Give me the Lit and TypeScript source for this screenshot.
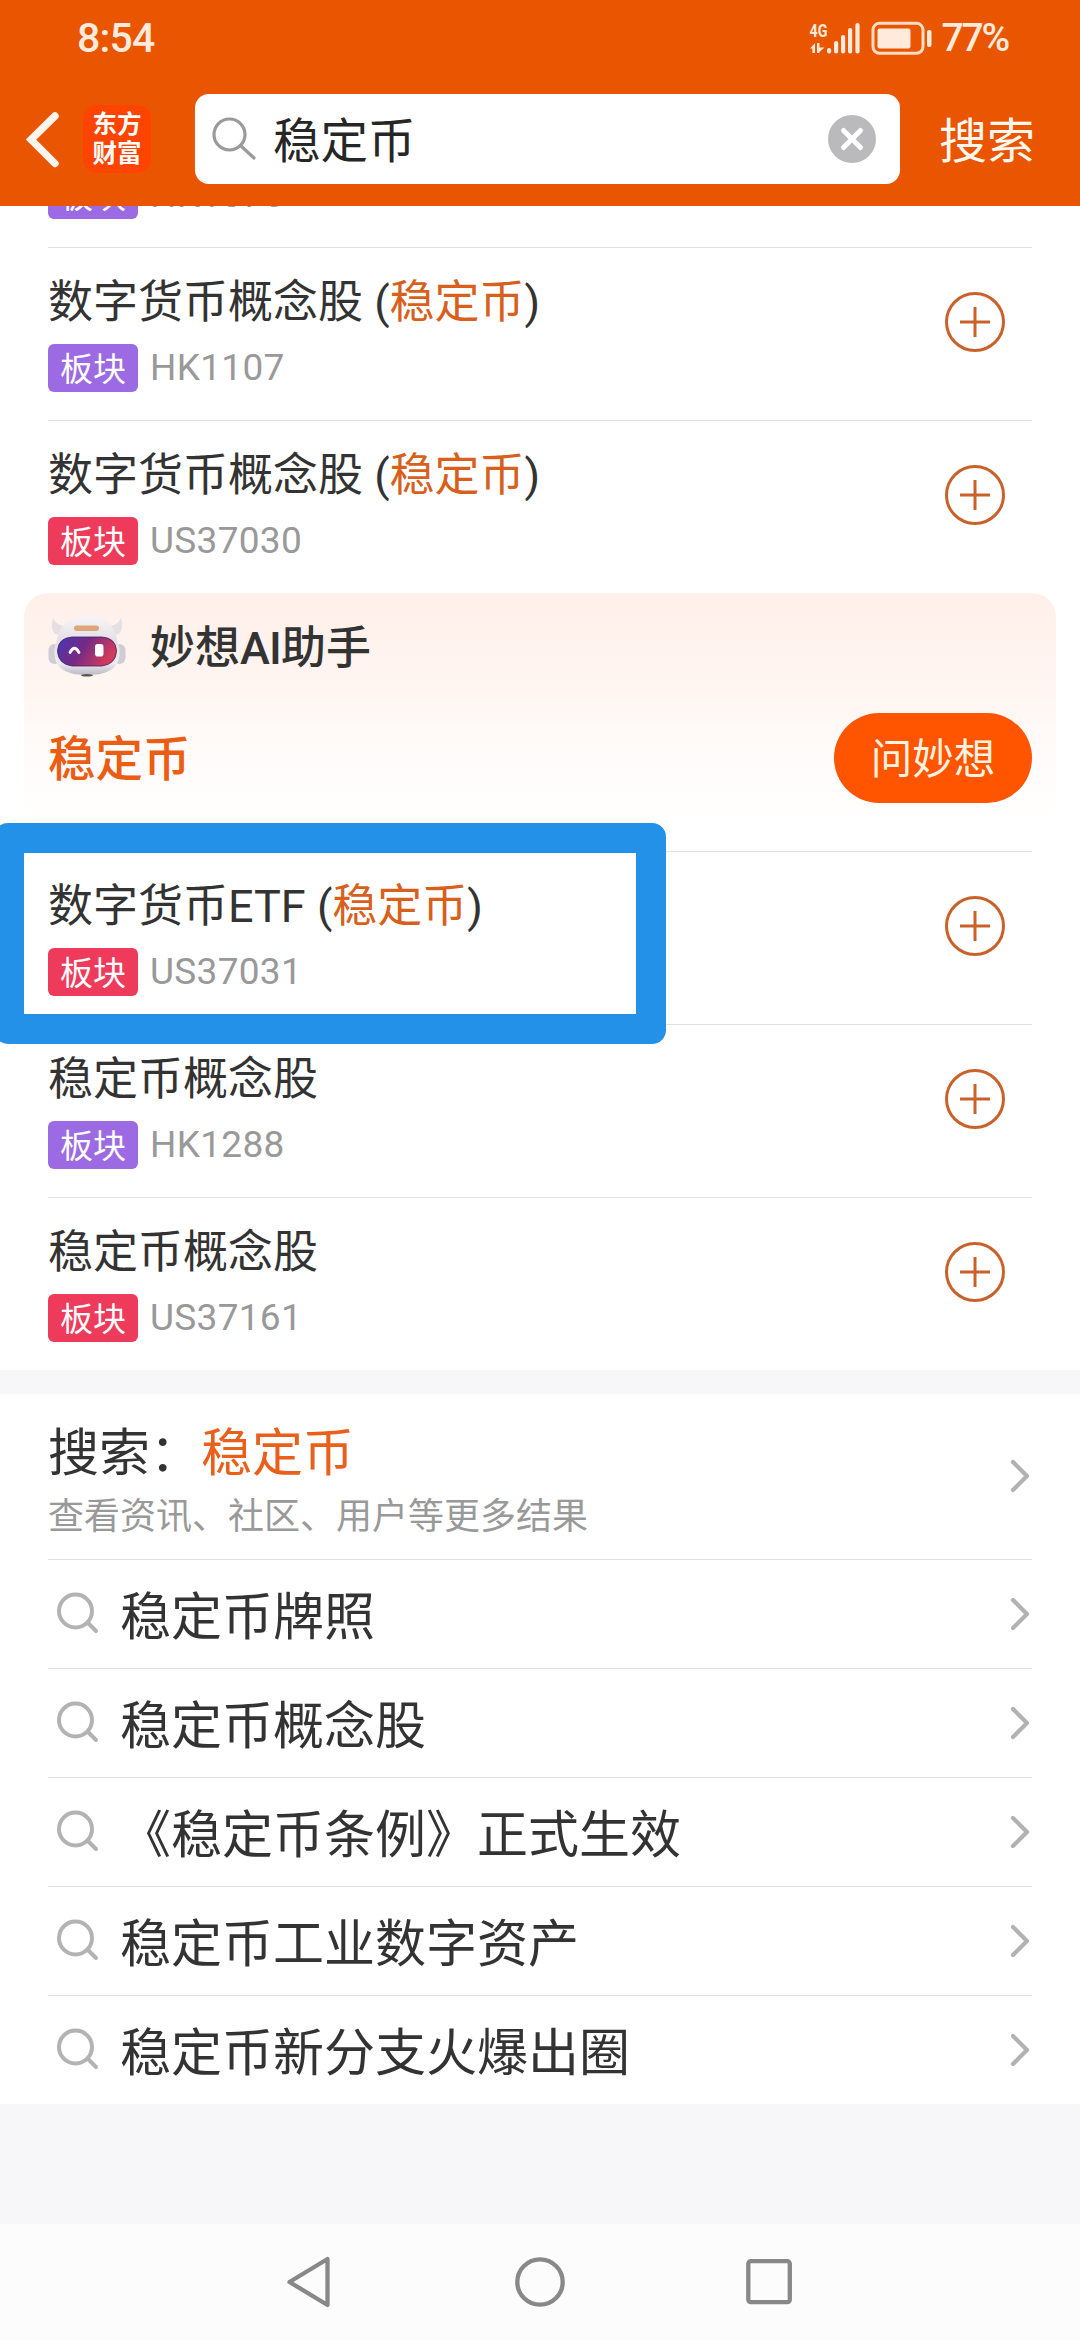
import { LitElement, html, css, svg } from "lit";
import { customElement, property } from "lit/decorators.js";

interface Board {
  name: string;
  alias?: string;
  market: "hk" | "us";
  code: string;
  marked?: boolean;
}

const KEYWORD = "稳定币";

const BOARDS_TOP: Board[] = [
  { name: "数字货币", market: "hk", code: "HK1076" },
  { name: "数字货币概念股", alias: KEYWORD, market: "hk", code: "HK1107" },
  { name: "数字货币概念股", alias: KEYWORD, market: "us", code: "US37030" },
];

const BOARDS_BOTTOM: Board[] = [
  { name: "数字货币ETF", alias: KEYWORD, market: "us", code: "US37031", marked: true },
  { name: "稳定币概念股", market: "hk", code: "HK1288" },
  { name: "稳定币概念股", market: "us", code: "US37161" },
];

const SUGGESTIONS = [
  "稳定币牌照",
  "稳定币概念股",
  "《稳定币条例》正式生效",
  "稳定币工业数字资产",
  "稳定币新分支火爆出圈",
];

const chevron = html`<svg class="chevron" width="24" height="36" viewBox="0 0 24 36" fill="none">
  <path d="M5 4 19 18 5 32" stroke="#b2b2b2" stroke-width="4.2" stroke-linecap="round" stroke-linejoin="round" />
</svg>`;

@customElement("status-bar")
class StatusBar extends LitElement {
  static styles = css`
    :host {
      display: flex;
      align-items: center;
      height: 76px;
      padding: 0 72px 0 77px;
      color: #ffeadb;
      box-sizing: border-box;
    }
    .time {
      flex: 1;
      font-size: 41px;
      font-weight: 500;
      line-height: 76px;
      letter-spacing: -0.8px;
    }
    .icons {
      display: block;
      margin-right: 9px;
    }
    .net {
      font: 700 19px Roboto, sans-serif;
    }
    .percent {
      font-size: 39px;
      font-weight: 500;
      line-height: 76px;
      letter-spacing: -2.2px;
    }
  `;
  render() {
    return html`
      <div class="time">8:54</div>
      <svg class="icons" width="124" height="36" viewBox="807 18 124 36" fill="#ffeadb">
        <text class="net" x="807.5" y="35" textLength="18" lengthAdjust="spacingAndGlyphs">4G</text>
        <path d="M808 46.5 813 41V51H810.400V46.500ZM815 41H817.400V45.500H822.500L817.400 50V51H815Z" />
        ${[
          [825, 46],
          [832, 39],
          [839, 33],
          [846, 26],
          [853.4, 21],
        ].map(([x, y]) => svg`<rect x=${x} y=${y} width="4.2" height=${51.5 - y} rx="2" />`)}
        <rect x="871" y="21.300" width="50" height="30" rx="6.500" fill="none" stroke="#ffdcc4" stroke-width="3" />
        <rect x="875.500" y="26.500" width="33" height="20" rx="2" />
        <rect x="925" y="28" width="4.500" height="17" rx="2" />
      </svg>
      <div class="percent">77%</div>
    `;
  }
}

@customElement("search-header")
class SearchHeader extends LitElement {
  static styles = css`
    :host {
      display: flex;
      align-items: center;
      height: 130px;
      padding: 0 45px 4px 22px;
      box-sizing: border-box;
    }
    .back {
      display: block;
    }
    .logo {
      display: grid;
      align-content: center;
      justify-content: center;
      width: 68px;
      height: 68px;
      margin: 0 44px 0 17px;
      border-radius: 14px;
      background: #ff4400;
      color: #fff;
      font-size: 24.500px;
      font-weight: 700;
      line-height: 29.500px;
      box-sizing: border-box;
    }
    .field {
      display: flex;
      align-items: center;
      width: 705px;
      height: 90px;
      padding: 0 24px 0 17px;
      border-radius: 14px;
      background: #fff;
      box-sizing: border-box;
    }
    .query {
      flex: 1;
      margin-left: 16px;
      padding-top: 6px;
      color: #262626;
      font-size: 47.500px;
      line-height: 84px;
    }
    .submit {
      padding-top: 6px;
      margin-left: 39px;
      color: #fff8ee;
      font-size: 48px;
      line-height: 84px;
    }
  `;
  render() {
    return html`
      <svg class="back" width="44" height="64" viewBox="22 107 44 64" fill="none">
        <path d="M55 116 31 139.500 55 163.500" stroke="#fff5ec" stroke-width="7.400" stroke-linecap="round" />
      </svg>
      <div class="logo"><span>东方</span><span>财富</span></div>
      <div class="field">
        <svg width="45" height="45" viewBox="0 0 45 45" fill="none" stroke="#9a9a9a" stroke-width="3.200">
          <circle cx="17.500" cy="17.500" r="15.500" />
          <path d="M28.500 28.500 42 41" stroke-linecap="round" />
        </svg>
        <div class="query">稳定币</div>
        <svg width="48" height="48" viewBox="0 0 48 48">
          <circle cx="24" cy="24" r="24" fill="#bababd" />
          <path d="M15.500 15.500 32.500 32.500M32.500 15.500 15.500 32.500" stroke="#fff" stroke-width="5" stroke-linecap="round" />
        </svg>
      </div>
      <div class="submit">搜索</div>
    `;
  }
}

@customElement("board-row")
class BoardRow extends LitElement {
  @property({ attribute: false }) board!: Board;

  static styles = css`
    :host {
      display: block;
      position: relative;
      height: 173px;
      padding: 0 48px;
    }
    .row {
      display: flex;
      height: 173px;
      padding: 0 27px 0 0;
      border-top: 1px solid #e2e2e2;
      box-sizing: border-box;
    }
    .info {
      flex: 1;
    }
    .name {
      height: 66px;
      margin-top: 22px;
      color: #333;
      font-size: 45px;
      line-height: 66px;
      white-space: pre;
    }
    .alias {
      color: #d85f1c;
    }
    .meta {
      display: flex;
      align-items: center;
      height: 48px;
      margin-top: 8px;
      gap: 12px;
    }
    .tag {
      width: 90px;
      height: 48px;
      border-radius: 6px;
      color: #fff;
      font-size: 33px;
      line-height: 52px;
      text-align: center;
    }
    .hk {
      background: #9c6be4;
    }
    .us {
      background: #ee3b5b;
    }
    .code {
      color: #999;
      font-size: 37px;
      line-height: 48px;
      letter-spacing: 0.3px;
    }
    .add {
      display: block;
      margin-top: 44px;
    }
    .mark {
      position: absolute;
      left: -6px;
      top: -28px;
      width: 672px;
      height: 221px;
      border: 30px solid #2491e9;
      border-radius: 14px;
      box-sizing: border-box;
      z-index: 1;
    }
  `;
  render() {
    const b = this.board;
    return html`
      <div class="row">
        <div class="info">
          <div class="name">${b.name}${b.alias ? html` (<span class="alias">${b.alias}</span>)` : ""}</div>
          <div class="meta">
            <span class="tag ${b.market}">板块</span>
            <span class="code">${b.code}</span>
          </div>
        </div>
        <svg class="add" width="60" height="60" viewBox="0 0 60 60" fill="none" stroke="#c9622a">
          <circle cx="30" cy="30" r="28.500" stroke-width="3" />
          <path d="M15 30H45M30 15V45" stroke-width="3" />
        </svg>
      </div>
      ${b.marked ? html`<div class="mark"></div>` : ""}
    `;
  }
}

@customElement("assistant-card")
class AssistantCard extends LitElement {
  static styles = css`
    :host {
      display: block;
      height: 258px;
      padding: 0 24px;
      box-sizing: border-box;
    }
    .card {
      height: 230px;
      padding: 0 24px;
      border-radius: 24px;
      background: linear-gradient(#ffefe9, #fff6f2 45%, #fffaf8 62%, #fff);
      box-sizing: border-box;
    }
    .head {
      display: flex;
      align-items: center;
      height: 106px;
      gap: 24px;
    }
    .title {
      padding-top: 5px;
      color: #333;
      font-size: 45px;
      font-weight: 500;
      line-height: 100px;
    }
    .latin {
      letter-spacing: -0.8px;
    }
    .ask {
      display: flex;
      align-items: center;
      justify-content: space-between;
      height: 90px;
      margin-top: 14px;
    }
    .topic {
      padding-top: 5px;
      color: #ec5c12;
      font-size: 47.500px;
      font-weight: 500;
      line-height: 85px;
    }
    .button {
      width: 198px;
      height: 90px;
      padding-top: 4px;
      border-radius: 45px;
      background: #ff5500;
      color: #fff3e0;
      font-size: 41.500px;
      line-height: 86px;
      text-align: center;
      box-sizing: border-box;
    }
  `;
  render() {
    return html`
      <div class="card">
        <div class="head">
          <svg width="78" height="62" viewBox="0 0 78 62">
            <defs>
              <linearGradient id="visor" x1="0" x2="1" y1="0" y2="0.35">
                <stop offset="0" stop-color="#4638b4" />
                <stop offset="0.5" stop-color="#742a86" />
                <stop offset="1" stop-color="#d13a5c" />
              </linearGradient>
              <linearGradient id="shell" x1="0" x2="0" y1="0" y2="1">
                <stop offset="0" stop-color="#f8f6f8" />
                <stop offset="0.4" stop-color="#e4e1e6" />
                <stop offset="0.8" stop-color="#eeecf1" />
                <stop offset="1" stop-color="#bdb8c4" />
              </linearGradient>
            </defs>
            <path d="M5 3Q2 13 7 19L13 20 18 11Q8 11 5 3ZM73 3Q76 13 71 19L65 20 60 11Q70 11 73 3Z" fill="#e3dfe3" />
            <rect x="0.500" y="29" width="12" height="20" rx="6" fill="#cfccd4" />
            <rect x="65.500" y="29" width="12" height="20" rx="6" fill="#cfccd4" />
            <path
              d="M39 0.500C54 0.500 64 7 68 20L71.500 34C73 52 62 60 39 60 16 60 5 52 6.500 34L10 20C14 7 24 0.500 39 0.500Z"
              fill="url(#shell)"
            />
            <ellipse cx="39" cy="60.300" rx="6" ry="1.300" fill="#555" />
            <rect x="26" y="10.500" width="25" height="5.500" rx="2.700" fill="#dda67a" />
            <path
              d="M24 22H54Q68 23 68.500 36 68 49 54 51H24Q10 49 9.500 36 10 23 24 22Z"
              fill="url(#visor)"
              stroke="#3a2266"
              stroke-width="0.800"
            />
            <path d="M22 37.500Q26.500 29 31 37.500" fill="none" stroke="#fff" stroke-width="2.800" stroke-linecap="round" />
            <rect x="47" y="29" width="8.500" height="12.500" rx="2.800" fill="#fff" />
          </svg>
          <div class="title">妙想<span class="latin">AI</span>助手</div>
        </div>
        <div class="ask">
          <div class="topic">稳定币</div>
          <div class="button">问妙想</div>
        </div>
      </div>
    `;
  }
}

@customElement("search-more")
class SearchMore extends LitElement {
  static styles = css`
    :host {
      display: block;
      padding: 0 48px;
      background: #fff;
    }
    .summary,
    .item {
      display: flex;
      align-items: center;
      box-sizing: border-box;
    }
    .summary {
      height: 165px;
      padding-bottom: 1px;
    }
    .texts {
      flex: 1;
      padding-top: 14px;
    }
    .heading {
      color: #333;
      font-size: 51px;
      line-height: 66px;
    }
    .keyword {
      color: #e8601c;
    }
    .hint {
      margin-top: 1px;
      color: #999;
      font-size: 36px;
      line-height: 58px;
    }
    .item {
      height: 109px;
      border-top: 1px solid #e2e2e2;
    }
    .lens {
      margin: 0 20px 2px 8px;
    }
    .label {
      flex: 1;
      padding-top: 7px;
      color: #333;
      font-size: 51px;
      line-height: 100px;
    }
    .chevron {
      display: block;
      margin-bottom: 1px;
    }
  `;
  render() {
    return html`
      <div class="summary">
        <div class="texts">
          <div class="heading">搜索：<span class="keyword">稳定币</span></div>
          <div class="hint">查看资讯、社区、用户等更多结果</div>
        </div>
        ${chevron}
      </div>
      ${SUGGESTIONS.map(
        (s) => html`<div class="item">
          <svg class="lens" width="44" height="44" viewBox="0 0 44 44" fill="none" stroke="#b3b3b3" stroke-width="4">
            <circle cx="19.500" cy="20" r="16.500" />
            <path d="M32 32 40 40" stroke-linecap="round" />
          </svg>
          <div class="label">${s}</div>
          ${chevron}
        </div>`
      )}
    `;
  }
}

@customElement("app-root")
class AppRoot extends LitElement {
  static styles = css`
    :host {
      display: flex;
      flex-direction: column;
      width: 1080px;
      height: 2340px;
      overflow: hidden;
      background: #f7f7fa;
      font-family: Roboto, "Noto Sans CJK SC", sans-serif;
    }
    .top {
      flex: none;
      height: 206px;
      background: #e95500;
    }
    .boards {
      display: flex;
      flex: none;
      flex-direction: column;
      justify-content: flex-end;
      height: 1164px;
      background: #fff;
      overflow: hidden;
    }
    .boards > * {
      flex: none;
    }
    .gap {
      flex: none;
      height: 24px;
    }
    .nav {
      display: grid;
      grid-template-columns: repeat(3, 230px);
      justify-content: center;
      justify-items: center;
      align-items: center;
      height: 116px;
      margin-top: auto;
      background: #fcfcfc;
    }
  `;
  render() {
    return html`
      <div class="top">
        <status-bar></status-bar>
        <search-header></search-header>
      </div>
      <div class="boards">
        ${BOARDS_TOP.map((b) => html`<board-row .board=${b}></board-row>`)}
        <assistant-card></assistant-card>
        ${BOARDS_BOTTOM.map((b) => html`<board-row .board=${b}></board-row>`)}
      </div>
      <div class="gap"></div>
      <search-more></search-more>
      <div class="nav">
        <svg width="50" height="52" viewBox="0 0 50 52" fill="none" stroke="#888" stroke-width="4.300" stroke-linejoin="round">
          <path d="M42.500 3V49L4.500 26Z" />
        </svg>
        <svg width="50" height="52" viewBox="0 0 50 52" fill="none" stroke="#888" stroke-width="4.300">
          <circle cx="25" cy="26" r="22.700" />
        </svg>
        <svg width="50" height="52" viewBox="0 0 50 52" fill="none" stroke="#888" stroke-width="4.300">
          <rect x="3.300" y="5.200" width="41.500" height="41" rx="2.500" />
        </svg>
      </div>
    `;
  }
}
